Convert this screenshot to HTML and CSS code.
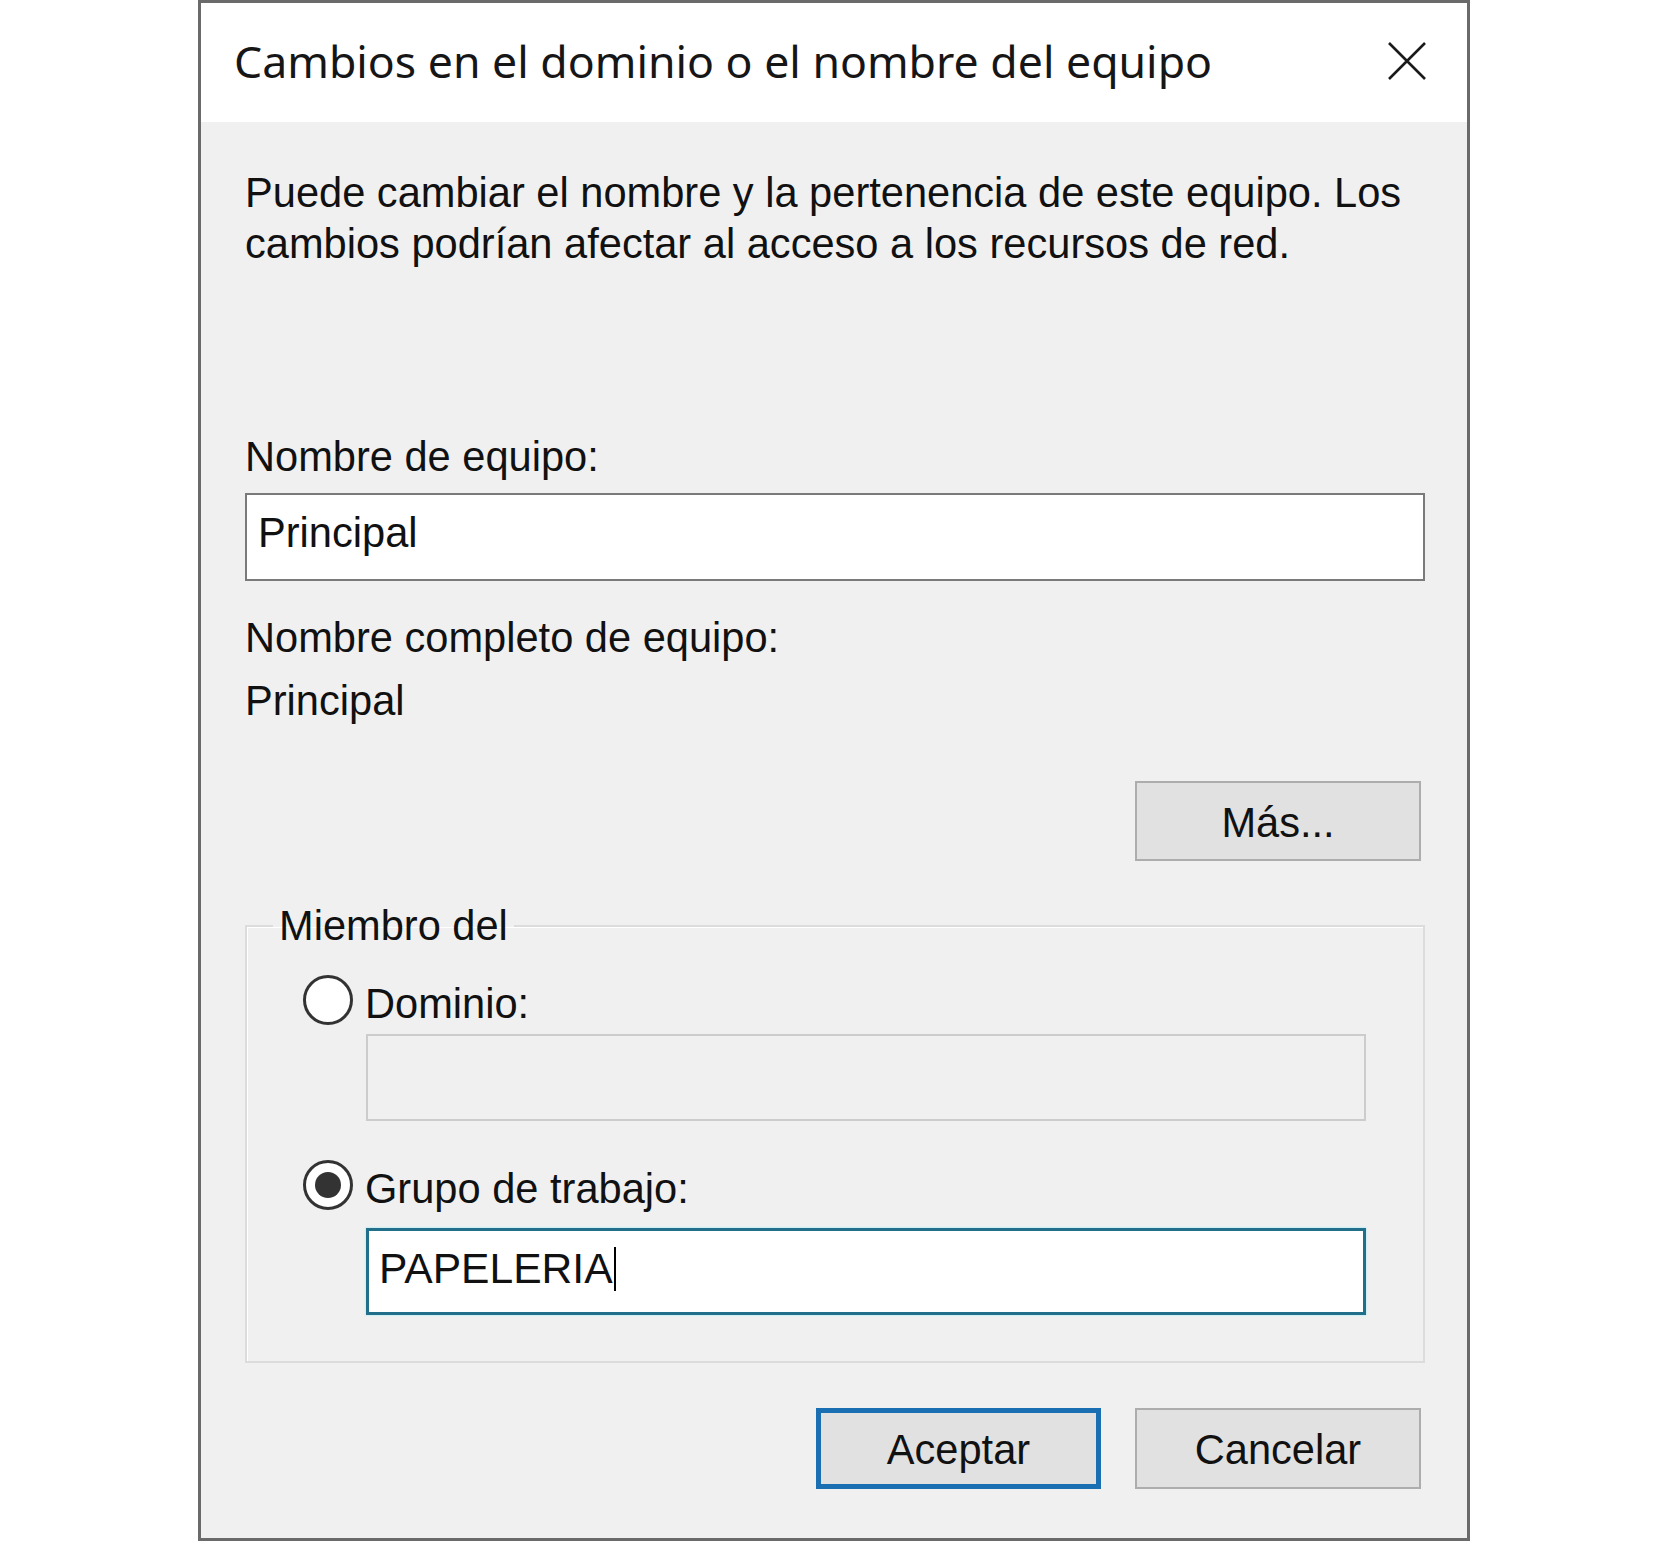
FILE: index.html
```html
<!DOCTYPE html>
<html lang="es">
<head>
<meta charset="utf-8">
<title>Cambios en el dominio o el nombre del equipo</title>
<link rel="stylesheet" href="styles.css">
</head>
<body>
<div class="dialog">
  <div class="titlebar">
    <span class="title">Cambios en el dominio o el nombre del equipo</span>
    <span class="close" aria-label="Cerrar">
      <svg viewBox="0 0 40 40" width="40" height="40"><path d="M2 2 L38 38 M38 2 L2 38" stroke="#1a1a1a" stroke-width="2.6" fill="none"/></svg>
    </span>
  </div>
  <div class="body">
    <p class="desc">Puede cambiar el nombre y la pertenencia de este equipo. Los cambios podrían afectar al acceso a los recursos de red.</p>
    <div class="lbl lbl-name">Nombre de equipo:</div>
    <div class="field field-name">Principal</div>
    <div class="lbl lbl-full">Nombre completo de equipo:</div>
    <div class="lbl value">Principal</div>
    <div class="more-row"><div class="btn btn-more">Más...</div></div>
    <fieldset class="group">
      <legend>Miembro del</legend>
      <div class="radio-row first"><span class="radio"></span><span class="radio-label">Dominio:</span></div>
      <div class="field field-sub disabled"></div>
      <div class="radio-row second"><span class="radio checked"></span><span class="radio-label">Grupo de trabajo:</span></div>
      <div class="field field-sub focus">PAPELERIA<span class="caret"></span></div>
    </fieldset>
    <div class="actions">
      <div class="btn btn-ok">Aceptar</div>
      <div class="btn btn-cancel">Cancelar</div>
    </div>
  </div>
</div>
</body>
</html>
```
FILE: styles.css
```css
* { box-sizing: border-box; }
html, body { margin: 0; padding: 0; background: #ffffff; }
body { width: 1667px; height: 1541px; overflow: hidden; }

.dialog {
  margin-left: 198px;
  width: 1272px;
  height: 1541px;
  border: 3px solid #6a6a6a;
  background: #f0f0f0;
  display: flex;
  flex-direction: column;
  font-family: "Liberation Sans", Arial, sans-serif;
  font-size: 41.6px;
  color: #111111;
}

.titlebar {
  height: 119px;
  background: #ffffff;
  display: flex;
  align-items: flex-start;
  justify-content: space-between;
  padding-left: 33px;
  padding-right: 40px;
}
.title {
  font-family: "Noto Sans", "Open Sans", sans-serif;
  font-size: 44.6px;
  line-height: 56px;
  margin-top: 30px;
  color: #161616;
}
.close {
  width: 40px;
  height: 40px;
  margin-top: 38px;
  display: block;
}
.close svg { display: block; }

.body {
  flex: 1;
  padding: 45px 42px 0 44px;
  display: flex;
  flex-direction: column;
}

.desc {
  margin: 0;
  line-height: 51px;
  height: 102px;
  padding-right: 10px;
}

.lbl { line-height: 51px; height: 51px; white-space: nowrap; }
.lbl-name { margin-top: 162px; }
.lbl-full { margin-top: 31px; }
.value { margin-top: 12px; }

.field {
  background: #ffffff;
  border: 2px solid #7a7a7a;
  white-space: nowrap;
}
.field-name {
  margin-top: 11px;
  height: 88px;
  line-height: 76px;
  padding-left: 11px;
}

.more-row { display: flex; justify-content: flex-end; margin-top: 55px; padding-right: 4px; }

.btn {
  height: 80px;
  background: #e1e1e1;
  border: 2px solid #adadad;
  display: flex;
  align-items: center;
  justify-content: center;
  line-height: 51px;
  padding-top: 2px;
}
.btn-more { width: 286px; }

.group {
  margin: 39px 0 0 0;
  padding: 0 0 46px 0;
  border: 2px solid #dcdcdc;
  box-shadow: inset 1px 1px 0 #ffffff;
  min-width: 0;
}
.group legend {
  margin-left: 26px;
  padding: 0 6px;
  line-height: 51px;
}

.radio-row {
  display: flex;
  align-items: center;
  height: 51px;
  line-height: 51px;
  margin-left: 56px;
}
.radio-row.first { margin-top: 27px; }
.radio-row.second { margin-top: 42px; }
.radio {
  width: 50px;
  height: 50px;
  border-radius: 50%;
  border: 3px solid #333333;
  background: #ffffff;
  margin-top: -7px;
  flex: none;
  display: flex;
  align-items: center;
  justify-content: center;
}
.radio.checked::after {
  content: "";
  width: 26px;
  height: 26px;
  border-radius: 50%;
  background: #333333;
}
.radio-label { margin-left: 12px; }

.field-sub {
  margin: 0 57px 0 119px;
  height: 87px;
}
.field-sub.disabled { margin-top: 5px; background: #f0f0f0; border-color: #cccccc; }
.field-sub.focus {
  margin-top: 14px;
  border: 3px solid #226f8c;
  box-shadow: 0 0 2px #8fe8f5;
  padding-left: 10px;
  padding-bottom: 6px;
  display: flex;
  align-items: center;
  height: 87px;
  font-size: 42.6px;
}
.caret {
  display: inline-block;
  width: 2px;
  height: 44px;
  background: #000000;
  margin-left: 1px;
}

.actions {
  display: flex;
  justify-content: flex-end;
  gap: 34px;
  margin-top: 45px;
  padding-right: 4px;
}
.btn-ok { width: 285px; height: 81px; border: 5px solid #1a6fb3; }
.btn-cancel { width: 286px; height: 81px; }
```
